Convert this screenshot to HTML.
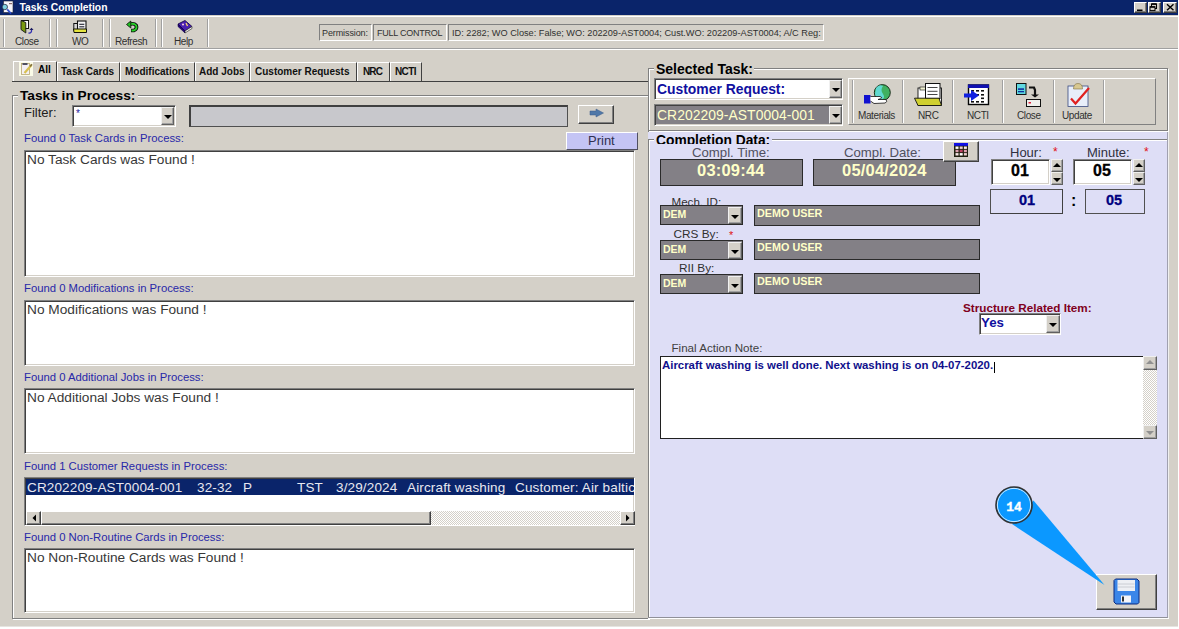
<!DOCTYPE html>
<html><head><meta charset="utf-8">
<style>
*{box-sizing:border-box;margin:0;padding:0}
html,body{width:1179px;height:629px;overflow:hidden;background:#fff}
body{position:relative;font-family:"Liberation Sans",sans-serif;color:#000}
.a{position:absolute}
.t{position:absolute;white-space:nowrap;line-height:1}
.win{left:0;top:0;width:1178px;height:627px;background:#d4d0c8;border-bottom:1px solid #e6e4e0}
.sep{position:absolute;width:2px;border-left:1px solid #a0a0a0;border-right:1px solid #fff}
.sunk{border-top:1px solid #808080;border-left:1px solid #808080;border-right:1px solid #fff;border-bottom:1px solid #fff}
.sunk2{border-top:1px solid #808080;border-left:1px solid #808080;border-right:1px solid #fff;border-bottom:1px solid #fff;box-shadow:inset 1px 1px 0 #404040, inset -1px -1px 0 #d4d0c8}
.raise{background:#d4d0c8;border-top:1px solid #fff;border-left:1px solid #fff;border-right:1px solid #404040;border-bottom:1px solid #404040;box-shadow:inset -1px -1px 0 #808080}
.grp{position:absolute;border:1px solid #808080;box-shadow:1px 1px 0 #fff inset, 1px 1px 0 #fff}
.lbl{font-size:11.3px;color:#2828a8}
.list{position:absolute;background:#fff}
.ddb{position:absolute;background:#d4d0c8;border-top:1px solid #f0f0f0;border-left:1px solid #f0f0f0;border-right:1px solid #606060;border-bottom:1px solid #606060;box-shadow:inset -1px -1px 0 #a0a0a0}
.ddb:after{content:"";position:absolute;left:50%;top:50%;margin-left:-4px;margin-top:-1px;border-left:4px solid transparent;border-right:4px solid transparent;border-top:4px solid #000}
.ddb.up:after{border-top:0;border-bottom:4px solid #000;margin-top:-3px}
.ddb.dis:after{border-top-color:#909090}.ddb.up.dis:after{border-bottom-color:#909090}
.tab{position:absolute;top:62px;height:19px;font-size:10px;font-weight:bold;border-right:1px solid #404040;border-top:1px solid #fff;border-left:1px solid #fff;padding-top:4px;line-height:1;color:#101010}
.tb{font-size:10px;color:#303030;letter-spacing:-0.4px}
.gray{background:#838086;border:1px solid #2a2a2a}
.yel{color:#ffffc8;font-weight:bold}
</style></head>
<body>
<div class="a win"></div>

<!-- title bar -->
<div class="a" style="left:0;top:0;width:1178px;height:15px;background:#0a246a"></div>
<div class="t" style="left:19.5px;top:3.3px;font-size:10.3px;font-weight:bold;color:#fff">Tasks Completion</div>
<div class="a raise" style="left:1134px;top:2px;width:13px;height:11px"></div>
<div class="a raise" style="left:1148px;top:2px;width:13px;height:11px"></div>
<div class="a raise" style="left:1163px;top:2px;width:14px;height:11px"></div>

<!-- toolbar -->
<div class="a" style="left:0;top:16px;width:1178px;height:1px;background:#fff"></div>
<div class="a" style="left:0;top:48px;width:1178px;height:1px;background:#a0a0a0"></div>
<div class="a" style="left:0;top:49px;width:1178px;height:1px;background:#fff"></div>
<div class="sep" style="left:3px;top:19px;height:28px"></div>
<div class="sep" style="left:49px;top:19px;height:28px"></div>
<div class="sep" style="left:56px;top:19px;height:28px"></div>
<div class="sep" style="left:102px;top:19px;height:28px"></div>
<div class="sep" style="left:109px;top:19px;height:28px"></div>
<div class="sep" style="left:155px;top:19px;height:28px"></div>
<div class="sep" style="left:161px;top:19px;height:28px"></div>
<div class="sep" style="left:207px;top:19px;height:28px"></div>
<div class="t tb" style="left:15px;top:37px">Close</div>
<div class="t tb" style="left:72px;top:37px">WO</div>
<div class="t tb" style="left:115px;top:37px">Refresh</div>
<div class="t tb" style="left:174px;top:37px">Help</div>

<div class="a sunk" style="left:319px;top:24px;width:53px;height:17px"></div>
<div class="t tb" style="left:322px;top:29px;font-size:9px;letter-spacing:-0.1px">Permission:</div>
<div class="a sunk" style="left:373px;top:24px;width:74px;height:17px"></div>
<div class="t tb" style="left:377px;top:29px;font-size:9px;letter-spacing:-0.25px">FULL CONTROL</div>
<div class="a sunk" style="left:448px;top:24px;width:376px;height:17px"></div>
<div class="t tb" style="left:452px;top:29px;font-size:9.2px;letter-spacing:0">ID: 2282; WO Close: False; WO: 202209-AST0004; Cust.WO: 202209-AST0004; A/C Reg:</div>

<!-- tabs -->
<div class="a" style="left:12px;top:81px;width:636px;height:1px;background:#404040"></div>
<div class="a" style="left:13px;top:61px;width:44px;height:20px;border-left:1px solid #fff;border-top:1px solid #fff;border-right:1px solid #404040"></div>
<div class="t" style="left:38px;top:65px;font-size:10px;font-weight:bold">All</div>
<div class="tab" style="left:57px;width:63px;padding-left:3px">Task Cards</div>
<div class="tab" style="left:120px;width:75px;padding-left:4px">Modifications</div>
<div class="tab" style="left:195px;width:55px;padding-left:3px">Add Jobs</div>
<div class="tab" style="left:250px;width:107px;padding-left:4px">Customer Requests</div>
<div class="tab" style="left:357px;width:33px;padding-left:5px;letter-spacing:-0.9px">NRC</div>
<div class="tab" style="left:390px;width:32px;padding-left:4px;letter-spacing:-0.6px">NCTI</div>

<!-- left group -->
<div class="a" style="left:12px;top:95px;width:637px;height:524px;border:1px solid #808080;box-shadow:inset 1px 1px 0 #fff, 1px 1px 0 #fff"></div>
<div class="a" style="left:18px;top:88px;width:120px;height:12px;background:#d4d0c8"></div>
<div class="t" style="left:20px;top:89px;font-size:13.7px;font-weight:bold">Tasks in Process:</div>
<div class="t" style="left:24px;top:106px;font-size:13px;color:#202020">Filter:</div>
<div class="a sunk2" style="left:72px;top:105px;width:104px;height:22px;background:#fff"></div>
<div class="t" style="left:76px;top:109px;font-size:10px;color:#2020a0">*</div>
<div class="ddb" style="left:161px;top:107px;width:13px;height:18px"></div>
<div class="a" style="left:189px;top:105px;width:379px;height:22px;background:#c8c8cc;border-top:2px solid #404040;border-left:2px solid #404040;border-bottom:1px solid #505050;border-right:1px solid #505050"></div>
<div class="a raise" style="left:578px;top:105px;width:36px;height:19px"></div>

<div class="a" style="left:566px;top:132px;width:72px;height:18px;background:#c4c4f4;border-right:1px solid #505060;border-bottom:1px solid #505060;border-top:1px solid #fff;border-left:1px solid #fff"></div>
<div class="t" style="left:588px;top:134px;font-size:13px;color:#303050">Print</div>

<div class="t lbl" style="left:24px;top:133px">Found 0 Task Cards in Process:</div>
<div class="list sunk2" style="left:24px;top:150px;width:611px;height:127px"></div>
<div class="t" style="left:27px;top:153px;font-size:13.7px;color:#383838">No Task Cards was Found !</div>

<div class="t lbl" style="left:24px;top:283px">Found 0 Modifications in Process:</div>
<div class="list sunk2" style="left:24px;top:300px;width:611px;height:66px"></div>
<div class="t" style="left:27px;top:303px;font-size:13.7px;color:#383838">No Modifications was Found !</div>

<div class="t lbl" style="left:24px;top:372px">Found 0 Additional Jobs in Process:</div>
<div class="list sunk2" style="left:24px;top:388px;width:611px;height:66px"></div>
<div class="t" style="left:27px;top:391px;font-size:13.7px;color:#383838">No Additional Jobs was Found !</div>

<div class="t lbl" style="left:24px;top:461px">Found 1 Customer Requests in Process:</div>
<div class="list sunk2" style="left:24px;top:477px;width:611px;height:49px"></div>
<div class="a" style="left:26px;top:479px;width:608px;height:16px;background:#0a246a"></div>
<div class="a" style="left:25px;top:479px;width:609px;height:16px;overflow:hidden">
<div class="t" style="left:2px;top:2px;font-size:13.5px;letter-spacing:0.15px;color:#e8e8f0">CR202209-AST0004-001</div>
<div class="t" style="left:172px;top:2px;font-size:13.5px;letter-spacing:0.15px;color:#e8e8f0">32-32</div>
<div class="t" style="left:218px;top:2px;font-size:13.5px;letter-spacing:0.15px;color:#e8e8f0">P</div>
<div class="t" style="left:272px;top:2px;font-size:13.5px;letter-spacing:0.15px;color:#e8e8f0">TST</div>
<div class="t" style="left:311px;top:2px;font-size:13.5px;letter-spacing:0.15px;color:#e8e8f0">3/29/2024</div>
<div class="t" style="left:382px;top:2px;font-size:13.5px;letter-spacing:0.15px;color:#e8e8f0">Aircraft washing</div>
<div class="t" style="left:490px;top:2px;font-size:13.5px;letter-spacing:0.15px;color:#e8e8f0">Customer: Air baltic</div>
</div>
<div class="a" style="left:26px;top:511px;width:608px;height:14px;background:repeating-conic-gradient(#d4d0c8 0 25%,#fff 0 50%) 0 0/2px 2px"></div>
<div class="a raise" style="left:26px;top:511px;width:15px;height:14px"></div>
<div class="a raise" style="left:41px;top:511px;width:390px;height:14px"></div>
<div class="a raise" style="left:620px;top:511px;width:15px;height:14px"></div>

<div class="t lbl" style="left:24px;top:532px">Found 0 Non-Routine Cards in Process:</div>
<div class="list sunk2" style="left:24px;top:548px;width:611px;height:65px"></div>
<div class="t" style="left:27px;top:551px;font-size:13.7px;color:#383838">No Non-Routine Cards was Found !</div>

<!-- right: selected task -->
<div class="a" style="left:648px;top:68px;width:520px;height:63px;border:1px solid #808080;box-shadow:inset 1px 1px 0 #fff, 1px 1px 0 #fff"></div>
<div class="a" style="left:654px;top:62px;width:100px;height:10px;background:#d4d0c8"></div>
<div class="t" style="left:656px;top:62px;font-size:14px;font-weight:bold">Selected Task:</div>
<div class="a sunk2" style="left:654px;top:78px;width:189px;height:22px;background:#fff"></div>
<div class="t" style="left:657px;top:82.5px;font-size:13.9px;font-weight:bold;color:#1010a0">Customer Request:</div>
<div class="ddb" style="left:829px;top:80px;width:13px;height:18px"></div>
<div class="a sunk2" style="left:654px;top:104px;width:189px;height:22px;background:#838086"></div>
<div class="t" style="left:657px;top:108.5px;font-size:13.9px;letter-spacing:0.05px;color:#ffffc8">CR202209-AST0004-001</div>
<div class="ddb" style="left:829px;top:106px;width:13px;height:18px"></div>

<div class="a" style="left:848px;top:78px;width:308px;height:47px;border-top:1px solid #fff;border-left:1px solid #fff;border-right:1px solid #808080;border-bottom:1px solid #808080"></div>
<div class="sep" style="left:852px;top:80px;height:43px"></div>
<div class="sep" style="left:902px;top:80px;height:43px"></div>
<div class="sep" style="left:952px;top:80px;height:43px"></div>
<div class="sep" style="left:1002px;top:80px;height:43px"></div>
<div class="sep" style="left:1053px;top:80px;height:43px"></div>
<div class="sep" style="left:1103px;top:80px;height:43px"></div>
<div class="t tb" style="left:858px;top:111px">Materials</div>
<div class="t tb" style="left:918px;top:111px">NRC</div>
<div class="t tb" style="left:967px;top:111px">NCTI</div>
<div class="t tb" style="left:1017px;top:111px">Close</div>
<div class="t tb" style="left:1062px;top:111px">Update</div>

<!-- completion data lavender -->
<div class="a" style="left:648px;top:132px;width:520px;height:486px;background:#dedef6;border-right:1px solid #a0a0b0;border-bottom:1px solid #909098"></div>
<div class="a" style="left:648px;top:139px;width:519px;height:1px;background:#808080"></div>
<div class="a" style="left:1168px;top:132px;width:1px;height:487px;background:#f0f0f0"></div>
<div class="a" style="left:648px;top:618px;width:521px;height:1px;background:#fff"></div>
<div class="a" style="left:649px;top:140px;width:518px;height:1px;background:#fff"></div>
<div class="a" style="left:648px;top:139px;width:1px;height:478px;background:#808080"></div>
<div class="a" style="left:649px;top:140px;width:1px;height:477px;background:#fff"></div>
<div class="a" style="left:654px;top:133px;width:118px;height:10px;background:#dedef6"></div>
<div class="a" style="left:654px;top:132px;width:120px;height:12px;overflow:hidden"><div class="t" style="left:2px;top:2px;font-size:13.8px;font-weight:bold">Completion Data:</div></div>

<div class="t" style="left:692px;top:146px;font-size:13.2px;color:#505060">Compl. Time:</div>
<div class="a gray" style="left:660px;top:159px;width:143px;height:27px"></div>
<div class="t yel" style="left:697px;top:162px;font-size:16.5px;letter-spacing:0.2px">03:09:44</div>
<div class="t" style="left:844px;top:146px;font-size:13.2px;color:#505060">Compl. Date:</div>
<div class="a gray" style="left:813px;top:159px;width:143px;height:27px"></div>
<div class="t yel" style="left:842px;top:162px;font-size:16.5px;letter-spacing:0.2px">05/04/2024</div>
<div class="a raise" style="left:943px;top:141px;width:36px;height:21px"></div>

<div class="t" style="left:1010px;top:145.5px;font-size:13px;color:#303040">Hour:</div>
<div class="t" style="left:1053px;top:146px;font-size:12px;color:#e01010">*</div>
<div class="t" style="left:1087px;top:145.5px;font-size:13px;color:#303040">Minute:</div>
<div class="t" style="left:1144px;top:146px;font-size:12px;color:#e01010">*</div>
<div class="a sunk2" style="left:991px;top:159px;width:59px;height:26px;background:#fff"></div>
<div class="t" style="left:1011px;top:163px;font-size:16px;font-weight:bold;-webkit-text-stroke:0.3px #000">01</div>
<div class="ddb up" style="left:1051px;top:159px;width:12px;height:13px"></div>
<div class="ddb" style="left:1051px;top:172px;width:12px;height:13px"></div>
<div class="a sunk2" style="left:1073px;top:159px;width:59px;height:26px;background:#fff"></div>
<div class="t" style="left:1093px;top:163px;font-size:16px;font-weight:bold;-webkit-text-stroke:0.3px #000">05</div>
<div class="ddb up" style="left:1133px;top:159px;width:12px;height:13px"></div>
<div class="ddb" style="left:1133px;top:172px;width:12px;height:13px"></div>
<div class="a" style="left:990px;top:189px;width:73px;height:25px;border:1px solid #505050;border-right-color:#404040;border-bottom-color:#404040;background:#dedef6"></div>
<div class="t" style="left:1019px;top:192.5px;font-size:14.5px;font-weight:bold;color:#000080;-webkit-text-stroke:0.3px #000080">01</div>
<div class="t" style="left:1071px;top:193px;font-size:16px;font-weight:bold">:</div>
<div class="a" style="left:1085px;top:189px;width:60px;height:25px;border:1px solid #505050;background:#dedef6"></div>
<div class="t" style="left:1106px;top:192.5px;font-size:14.5px;font-weight:bold;color:#000080;-webkit-text-stroke:0.3px #000080">05</div>

<div class="t" style="left:671.5px;top:195.5px;font-size:11.6px;color:#303030">Mech. ID:</div>
<div class="a gray" style="left:660px;top:205px;width:83px;height:20px"></div>
<div class="t yel" style="left:663px;top:209px;font-size:10.5px">DEM</div>
<div class="ddb" style="left:728px;top:207px;width:14px;height:17px"></div>
<div class="a gray" style="left:754px;top:205px;width:226px;height:21px"></div>
<div class="t yel" style="left:757px;top:208px;font-size:10.8px">DEMO USER</div>

<div class="t" style="left:673.5px;top:228.5px;font-size:11.8px;color:#303030">CRS By:</div>
<div class="t" style="left:729px;top:230px;font-size:11px;color:#e01010">*</div>
<div class="a gray" style="left:660px;top:240px;width:83px;height:20px"></div>
<div class="t yel" style="left:663px;top:244px;font-size:10.5px">DEM</div>
<div class="ddb" style="left:728px;top:242px;width:14px;height:17px"></div>
<div class="a gray" style="left:754px;top:239px;width:226px;height:21px"></div>
<div class="t yel" style="left:757px;top:242px;font-size:10.8px">DEMO USER</div>

<div class="t" style="left:679px;top:262.5px;font-size:11.8px;color:#303030">RII By:</div>
<div class="a gray" style="left:660px;top:274px;width:83px;height:20px"></div>
<div class="t yel" style="left:663px;top:278px;font-size:10.5px">DEM</div>
<div class="ddb" style="left:728px;top:276px;width:14px;height:17px"></div>
<div class="a gray" style="left:754px;top:273px;width:226px;height:21px"></div>
<div class="t yel" style="left:757px;top:276px;font-size:10.8px">DEMO USER</div>

<div class="t" style="left:963px;top:301.5px;font-size:11.7px;font-weight:bold;color:#800020">Structure Related Item:</div>
<div class="a sunk2" style="left:979px;top:313px;width:82px;height:22px;background:#fff"></div>
<div class="t" style="left:981px;top:316px;font-size:13.3px;font-weight:bold;color:#1010a0">Yes</div>
<div class="ddb" style="left:1046px;top:315px;width:14px;height:18px"></div>

<div class="t" style="left:671.5px;top:341.5px;font-size:11.6px;color:#404040">Final Action Note:</div>
<div class="a" style="left:660px;top:356px;width:484px;height:83px;background:#fff;border:1px solid #202020"></div>
<div class="t" style="left:662px;top:360px;font-size:11.4px;font-weight:bold;color:#10108c">Aircraft washing is well done. Next washing is on 04-07-2020.</div>
<div class="a" style="left:1143px;top:356px;width:14px;height:83px;background:repeating-conic-gradient(#d4d0c8 0 25%,#fff 0 50%) 0 0/2px 2px"></div>
<div class="ddb up dis" style="left:1143px;top:356px;width:14px;height:14px"></div>
<div class="ddb dis" style="left:1143px;top:425px;width:14px;height:14px"></div>

<!-- save button -->
<div class="a raise" style="left:1096px;top:574px;width:61px;height:36px"></div>

<!-- icons + callout -->
<svg class="a" style="left:0;top:0" width="1179" height="629" shape-rendering="geometricPrecision">
<!-- title icon -->
<rect x="3.5" y="1" width="9.5" height="11.5" fill="#f4f4fa" stroke="#202030" stroke-width="0.6"/>
<rect x="9" y="3" width="3" height="1.2" fill="#8a6a6a"/>
<circle cx="4.8" cy="7" r="2.7" fill="#7fd0e0" stroke="#1a1a30" stroke-width="0.7"/>
<line x1="7.2" y1="9.3" x2="11" y2="13.5" stroke="#3050d0" stroke-width="1.8"/>
<!-- window buttons glyphs -->
<rect x="1137" y="9.5" width="5.5" height="1.6" fill="#000"/>
<rect x="1151.5" y="4" width="5" height="4.5" fill="none" stroke="#000" stroke-width="1"/>
<rect x="1151.5" y="3.3" width="5" height="1.5" fill="#000"/>
<rect x="1150" y="6.8" width="5" height="3.8" fill="#d4d0c8" stroke="#000" stroke-width="1"/>
<rect x="1150" y="6.3" width="5" height="1.4" fill="#000"/>
<path d="M1167 4.2 L1173.5 10.3 M1173.5 4.2 L1167 10.3" stroke="#000" stroke-width="1.4"/>
<!-- Close door -->
<rect x="21.5" y="20.5" width="7" height="8" fill="#fff" stroke="#151515" stroke-width="1"/>
<polygon points="21,20.5 25.8,22.5 25.8,33 21,29.5" fill="#7a9a10" stroke="#151515" stroke-width="0.9"/>
<path d="M28.5 33 Q32 33.5 31.5 29.5" fill="none" stroke="#3030b0" stroke-width="1.3"/>
<polygon points="29.5,30 31.5,27.8 33.5,30" fill="#1a1a60"/>
<!-- WO printer -->
<rect x="73.8" y="23.5" width="4.5" height="6.5" fill="#d8d8d8" stroke="#101010" stroke-width="1"/>
<rect x="77.5" y="21" width="8.5" height="8.5" fill="#f4f4f4" stroke="#101010" stroke-width="1.1"/>
<line x1="79.3" y1="24.3" x2="84.3" y2="24.3" stroke="#202030" stroke-width="1.1"/>
<line x1="79.3" y1="26.8" x2="84.3" y2="26.8" stroke="#202030" stroke-width="1.1"/>
<polygon points="73.5,29 86.5,29 86.5,32.5 74,32.5" fill="#e4e440" stroke="#101008" stroke-width="1"/>
<!-- Refresh -->
<path d="M129.5 24.3 Q134 22.8 136.2 25.5 Q137.5 28.8 134 30.5 L131 30.5" fill="none" stroke="#0a0a0a" stroke-width="3.6" stroke-linecap="butt"/>
<path d="M129.5 24.3 Q134 22.8 136.2 25.5 Q137.5 28.8 134 30.5 L131.5 30.5" fill="none" stroke="#28d028" stroke-width="1.8"/>
<polygon points="126.5,24.5 130.8,21 130.8,28" fill="#22c022" stroke="#0a0a0a" stroke-width="0.8"/>
<!-- Help book -->
<polygon points="178,24 185,20.5 192,26.5 185,31" fill="#4a20b0" stroke="#100040" stroke-width="0.8"/>
<polygon points="178,24 185,31 185,33 178,26.5" fill="#200080" stroke="#100040" stroke-width="0.6"/>
<polygon points="185,31 192,26.5 192,28.5 185,33" fill="#f4f4f0" stroke="#202020" stroke-width="0.6"/>
<circle cx="183" cy="24.5" r="1" fill="#ffd0e0"/>
<path d="M186 23 L187.5 26" stroke="#ffe060" stroke-width="1.2"/>
<!-- tab All icon -->
<rect x="19" y="62" width="14" height="14" fill="#fbfbe8"/>
<rect x="21.5" y="63.5" width="8" height="11" fill="#f4f0f4" stroke="#b8a870" stroke-width="0.8"/>
<rect x="22.5" y="63" width="5" height="2" fill="#505060"/>
<line x1="24.5" y1="73" x2="31.5" y2="65" stroke="#d8c050" stroke-width="2.3"/>
<line x1="30" y1="66.5" x2="32" y2="64.3" stroke="#807040" stroke-width="1.6"/>
<!-- filter arrow button -->
<polygon points="590,111 596,111 596,109 603.5,113 596,117 596,115 590,115" fill="#5078a8" stroke="#3a5a88" stroke-width="0.5"/>
<!-- Materials -->
<circle cx="882.3" cy="92.6" r="8" fill="#40b060" stroke="#102010" stroke-width="0.9"/>
<path d="M876 88 Q879 84 883 86 Q880 90 883 94 Q886 98 881 100 Q876 99 875 94 Z" fill="#60d8d0"/>
<rect x="864" y="95" width="6.5" height="8.5" fill="#1010d0"/>
<path d="M870.5 96.5 L880 96.5 Q884 98 878 99.5 L886 99.5 Q888 102 885 103 L874 103.5 L870.5 101" fill="#fff" stroke="#101010" stroke-width="0.8"/>
<!-- NRC -->
<rect x="918" y="88" width="23.5" height="17" fill="#fff" stroke="#101010" stroke-width="0.9"/>
<rect x="920" y="87" width="6" height="3" fill="#f0f0d0" stroke="#101010" stroke-width="0.6"/>
<rect x="925.5" y="83.5" width="14.5" height="15" fill="#fff" stroke="#101010" stroke-width="1"/>
<line x1="927.5" y1="87.5" x2="937.5" y2="87.5" stroke="#303030" stroke-width="0.9"/>
<line x1="927.5" y1="91.3" x2="937.5" y2="91.3" stroke="#303030" stroke-width="0.9"/>
<line x1="927.5" y1="94.5" x2="937.5" y2="94.5" stroke="#303030" stroke-width="0.9"/>
<polygon points="914.5,98.2 939,98.2 941.5,105.5 918,105.5" fill="#d0d030" stroke="#101010" stroke-width="0.9"/>
<!-- NCTI -->
<rect x="968.5" y="85" width="20" height="19.5" fill="#fff" stroke="#050505" stroke-width="1.4"/>
<rect x="968" y="84.5" width="21" height="3.5" fill="#1010b0"/>
<g fill="#101010"><rect x="971" y="90" width="3" height="1.6"/><rect x="976" y="90" width="3" height="1.6"/><rect x="981" y="90" width="3" height="1.6"/>
<rect x="976" y="94" width="3" height="1.6"/><rect x="981" y="94" width="3" height="1.6"/><rect x="981" y="97.5" width="3" height="1.6"/>
<rect x="971" y="101" width="3" height="1.6"/><rect x="976" y="101" width="3" height="1.6"/><rect x="981" y="101" width="3" height="1.6"/></g>
<polygon points="964,93.5 971,93.5 971,90 979,95.5 971,101 971,97.5 964,97.5" fill="#1020e0"/>
<!-- Close (task) -->
<rect x="1016.5" y="83.5" width="9.5" height="11" fill="#60d8e0" stroke="#101010" stroke-width="1"/>
<rect x="1018" y="88.3" width="6" height="1.6" fill="#1030a0"/>
<rect x="1018" y="91" width="6" height="1.3" fill="#1030a0"/>
<path d="M1029 87.5 L1034 87.5 L1035 90 L1035 95" fill="none" stroke="#101010" stroke-width="2.2"/>
<polygon points="1031,94.5 1039,94.5 1035,97.5" fill="#101010"/>
<rect x="1026.5" y="99.5" width="14" height="7" fill="#f0f0ec" stroke="#101010" stroke-width="1"/>
<rect x="1028.5" y="102" width="2.5" height="1.5" fill="#e02040"/>
<!-- Update -->
<rect x="1068" y="86" width="20" height="20.5" fill="#e8eefa" stroke="#3a4a80" stroke-width="0.8"/>
<path d="M1073.5 89 Q1073.5 83.5 1078 83.5 Q1082.5 83.5 1082.5 89 Z" fill="#d8c890" stroke="#807040" stroke-width="0.6"/>
<path d="M1071 98.5 L1075.5 103.5 L1089 88" fill="none" stroke="#e02020" stroke-width="2.2"/>
<!-- calendar -->
<rect x="954" y="143" width="14" height="14" fill="#202010"/>
<rect x="954" y="143" width="14" height="2.8" fill="#1010e8"/>
<rect x="955.5" y="146.5" width="3" height="2.4" fill="#fff"/>
<rect x="959.7" y="146.5" width="3" height="2.4" fill="#f0d0d0"/>
<rect x="963.9" y="146.5" width="3" height="2.4" fill="#f8e8e8"/>
<rect x="955.5" y="149.8" width="3" height="2.4" fill="#e0a0b0"/>
<rect x="959.7" y="149.8" width="3" height="2.4" fill="#c04060"/>
<rect x="963.9" y="149.8" width="3" height="2.4" fill="#e0a0b0"/>
<rect x="955.5" y="153.1" width="3" height="2.4" fill="#f8e8e8"/>
<rect x="959.7" y="153.1" width="3" height="2.4" fill="#fff"/>
<rect x="963.9" y="153.1" width="3" height="2.4" fill="#f0d0d0"/>
<!-- floppy -->
<path d="M1115.5 579 L1137 579 L1139 581 L1139 602.5 L1137.5 604 L1116 604 L1114 602 L1114 580.5 Z" fill="#3b86e8" stroke="#0a2a80" stroke-width="1"/>
<rect x="1117.5" y="580" width="17.5" height="11" fill="#eef0f4"/>
<line x1="1118" y1="584" x2="1134.5" y2="584" stroke="#c0c4cc" stroke-width="0.8"/>
<line x1="1118" y1="587" x2="1134.5" y2="587" stroke="#c0c4cc" stroke-width="0.8"/>
<rect x="1121" y="595.5" width="10" height="7" fill="#f4f4f8"/>
<rect x="1122" y="596.5" width="2" height="5" fill="#303030"/>
<polygon points="36,514.5 36,521.5 32.5,518" fill="#000"/>
<polygon points="626,514.5 626,521.5 629.5,518" fill="#000"/>
<rect x="994" y="362" width="1" height="11" fill="#000"/>
<!-- callout -->
<polygon points="1033.5,500.5 1104.5,585 1012,524" fill="#0b98ff"/>
<circle cx="1014" cy="505" r="18" fill="#0b98ff" stroke="#333" stroke-width="1.6"/>
<circle cx="1014" cy="505" r="16.6" fill="none" stroke="#fff" stroke-width="0.8"/>
<text x="1014" y="511.3" text-anchor="middle" font-family="Liberation Mono" font-weight="bold" font-size="13" fill="#fff" stroke="#fff" stroke-width="0.35">14</text>
</svg>
</body></html>
